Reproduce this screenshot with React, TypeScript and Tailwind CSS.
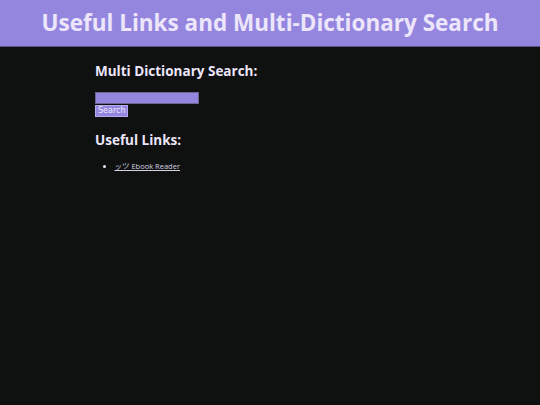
const App = () => {
  return (
    <div className="min-h-[405px] bg-[#0f1110]" style={{ fontFamily: '"Open Sans", "Noto Sans CJK JP", sans-serif' }}>
      <header className="h-[47px] bg-[#9486df] border-b border-[#5b5290] flex items-center justify-center">
        <h1 className="text-[22.5px] font-bold text-[#ede6fb] leading-none pt-[1px]">
          Useful Links and Multi-Dictionary Search
        </h1>
      </header>

      <main className="pl-[95px] pt-[14px]">
        <h2 className="text-[13.5px] font-bold text-[#ede6fb] leading-[20px]">Multi Dictionary Search:</h2>

        <form className="mt-[11px] flex flex-col items-start" onSubmit={(e) => e.preventDefault()}>
          <input
            type="text"
            className="w-[104px] h-[12px] bg-[#9486df] border border-[#6b6490] outline-none"
          />
          <button
            type="submit"
            className="mt-[1px] h-[12px] px-[2px] bg-[#9486df] border border-[#b3aaf0] text-[#ede6fb] text-[8px] leading-none"
            style={{ fontFamily: '"DejaVu Sans", sans-serif' }}
          >
            Search
          </button>
        </form>

        <h2 className="mt-[13px] text-[13.5px] font-bold text-[#ede6fb] leading-[20px]">Useful Links:</h2>

        <ul className="mt-[11px] ml-[8px] list-disc list-inside text-[#ede6fb] text-[7.5px]">
          <li>
            <a href="#" className="underline text-[#d6d2e4]">ッツ Ebook Reader</a>
          </li>
        </ul>
      </main>
    </div>
  );
};

export default App;
